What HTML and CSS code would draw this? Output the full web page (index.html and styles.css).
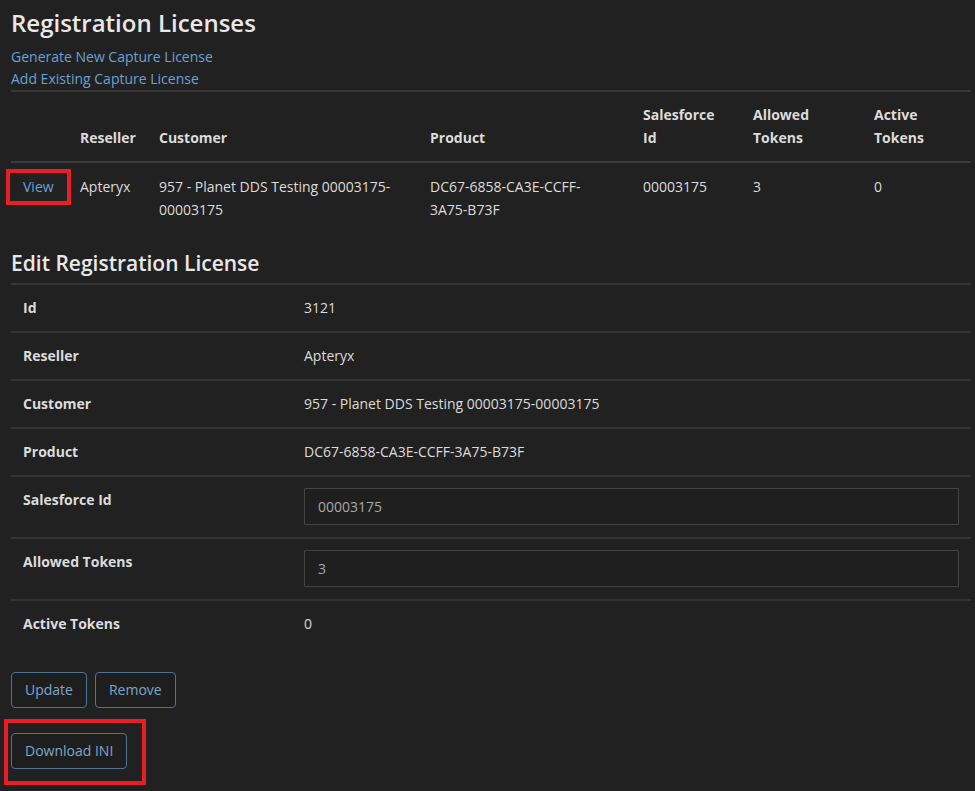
FILE: index.html
```html
<!DOCTYPE html>
<html lang="en">
  <head>
    <meta charset="UTF-8" />
    <meta name="viewport" content="width=device-width, initial-scale=1.0" />
    <title>Registration Licenses</title>
    <link rel="stylesheet" href="styles.css">
  </head>
  <body>
    <div class="container">
      <h2>Registration Licenses</h2>
      <div class="links">
        <a href="#">Generate New Capture License</a>
        <a href="#">Add Existing Capture License</a>
      </div>

      <table class="list">
        <colgroup>
          <col class="c-view" />
          <col class="c-reseller" />
          <col class="c-customer" />
          <col class="c-product" />
          <col class="c-sf" />
          <col class="c-allowed" />
          <col class="c-active" />
        </colgroup>
        <thead>
          <tr>
            <th></th>
            <th>Reseller</th>
            <th>Customer</th>
            <th>Product</th>
            <th>Salesforce Id</th>
            <th>Allowed Tokens</th>
            <th>Active Tokens</th>
          </tr>
        </thead>
        <tbody>
          <tr>
            <td><a href="#" class="marked view-link">View</a></td>
            <td>Apteryx</td>
            <td>957 - Planet DDS Testing 00003175-00003175</td>
            <td class="product">DC67-6858-CA3E-CCFF-3A75-B73F</td>
            <td>00003175</td>
            <td>3</td>
            <td>0</td>
          </tr>
        </tbody>
      </table>

      <h3>Edit Registration License</h3>
      <table class="edit">
        <tbody>
          <tr>
            <th>Id</th>
            <td>3121</td>
          </tr>
          <tr>
            <th>Reseller</th>
            <td>Apteryx</td>
          </tr>
          <tr>
            <th>Customer</th>
            <td>957 - Planet DDS Testing 00003175-00003175</td>
          </tr>
          <tr>
            <th>Product</th>
            <td>DC67-6858-CA3E-CCFF-3A75-B73F</td>
          </tr>
          <tr class="input-row">
            <th>Salesforce Id</th>
            <td><input type="text" value="00003175" /></td>
          </tr>
          <tr class="input-row">
            <th>Allowed Tokens</th>
            <td><input type="text" value="3" /></td>
          </tr>
          <tr>
            <th>Active Tokens</th>
            <td>0</td>
          </tr>
        </tbody>
      </table>

      <div class="actions form-actions">
        <button type="button">Update</button>
        <button type="button">Remove</button>
      </div>
      <div class="actions">
        <span class="marked download-box">
          <button type="button">Download INI</button>
        </span>
      </div>
    </div>
  </body>
</html>
```

FILE: styles.css
```css
body {
  font-family: "Open Sans", "Noto Sans", sans-serif;
  font-size: 14px;
  line-height: 23px;
  background-color: #212121;
  color: #dcdcdc;
  margin: 0;
  padding: 0;
}
.container {
  width: 960px;
  padding: 0 0 0 11px;
}
h2 {
  font-size: 24px;
  font-weight: 600;
  line-height: 30px;
  color: #e8e8e8;
  margin: 8px 0 8px;
}
h3 {
  font-size: 21px;
  font-weight: 600;
  line-height: 26px;
  color: #e8e8e8;
  margin: 17px 0 7px;
}
a {
  color: #6aa2d6;
  text-decoration: none;
}
.links {
  display: flex;
  flex-direction: column;
  align-items: flex-start;
  line-height: 22px;
  border-bottom: 2px solid #363636;
}
table {
  width: 960px;
  border-collapse: collapse;
  table-layout: fixed;
}
.list th,
.list td {
  padding: 11px 12px 12px;
  text-align: left;
}
.list th {
  font-weight: 700;
  vertical-align: bottom;
  border-bottom: 2px solid #3a3d40;
}
.list td {
  vertical-align: top;
  padding-top: 11.5px;
}
.list td.product {
  padding-right: 36px;
}
.c-view { width: 57px; }
.c-reseller { width: 79px; }
.c-customer { width: 271px; }
.c-product { width: 213px; }
.c-sf { width: 110px; }
.c-allowed { width: 121px; }
.c-active { width: 109px; }

.marked {
  outline: 4px solid #e81d25;
  outline-offset: -4px;
}
.view-link {
  display: inline-block;
  margin: -5.5px 0 -8px -17px;
  padding: 5.5px 17px 7.5px;
}

.edit {
  border-top: 2px solid #363636;
}
.edit th,
.edit td {
  padding: 11px 12px;
  line-height: 24px;
  text-align: left;
  vertical-align: top;
  border-bottom: 2px solid #343434;
}
.edit .input-row th,
.edit .input-row td {
  padding-bottom: 12px;
}
.edit th {
  width: 257px;
  font-weight: 700;
}
.edit tr:last-child th,
.edit tr:last-child td {
  border-bottom: none;
}
input {
  display: block;
  width: 100%;
  box-sizing: border-box;
  height: 37px;
  padding: 6px 13px;
  font-family: inherit;
  font-size: 14px;
  color: #a8a8a8;
  background-color: #1f1f1f;
  border: 1px solid #444;
  border-radius: 1px;
}
.actions {
  display: flex;
  gap: 8px;
  margin-top: 11px;
}
.form-actions {
  margin-top: 25px;
}
button {
  padding: 7px 13px;
  font-family: inherit;
  font-size: 14px;
  line-height: 20px;
  color: #7ea6cc;
  background-color: #1e1e1e;
  border: 1px solid #4f7494;
  border-radius: 4px;
  cursor: pointer;
}
.download-box {
  display: inline-block;
  margin-left: -7px;
  padding: 14px 19px 16px 7px;
}
.download-box button {
  display: block;
}
```
